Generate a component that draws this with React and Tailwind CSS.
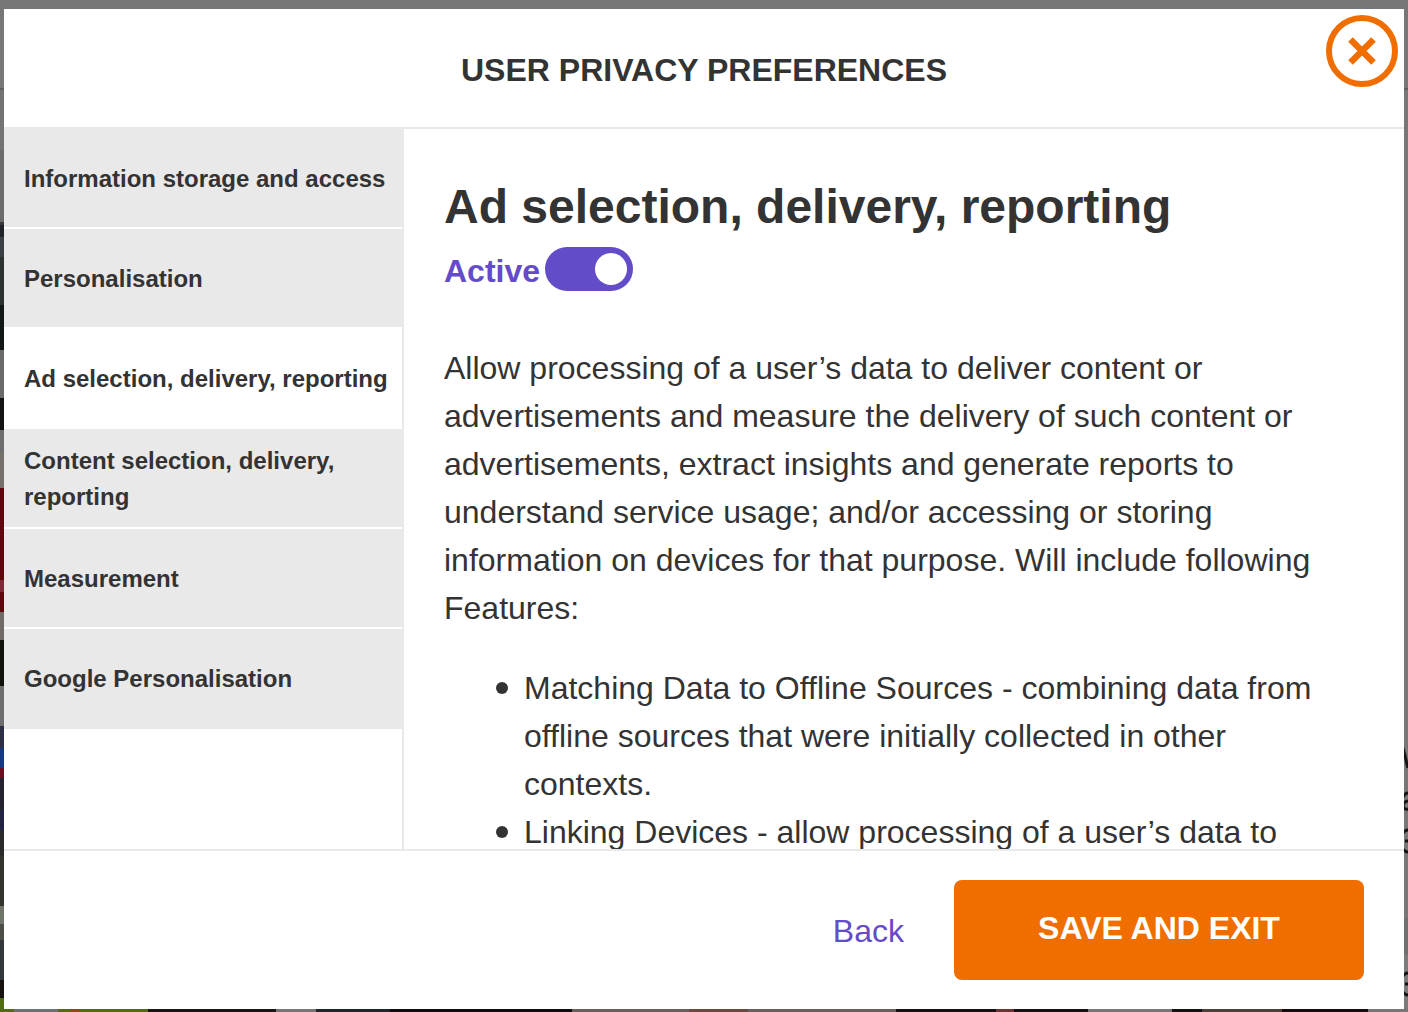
import React, { useState } from "react";

const sections = [
  "Information storage and access",
  "Personalisation",
  "Ad selection, delivery, reporting",
  "Content selection, delivery, reporting",
  "Measurement",
  "Google Personalisation",
];

const features = [
  "Matching Data to Offline Sources - combining data from offline sources that were initially collected in other contexts.",
  "Linking Devices - allow processing of a user’s data to",
];

const leftEdge = [
  [0, 88, "#777777"], [88, 2, "#5f5f5f"], [90, 60, "#757371"], [150, 72, "#6c6a6b"],
  [222, 3, "#3a3838"], [225, 12, "#20232a"], [237, 20, "#3a4145"], [257, 48, "#2b3332"],
  [305, 45, "#141717"], [350, 48, "#6a6a6a"], [398, 32, "#141311"], [430, 22, "#6e6e6e"],
  [452, 36, "#74716a"], [488, 124, "#5c080d"], [580, 12, "#7a2b35"], [612, 28, "#6d6a68"],
  [640, 46, "#12110e"], [686, 40, "#6f6e6c"], [726, 22, "#2c2f45"], [748, 20, "#153a80"],
  [768, 10, "#671022"], [778, 32, "#25232d"], [810, 20, "#222344"], [830, 26, "#292a2c"],
  [856, 50, "#34332b"], [906, 18, "#70756a"], [924, 16, "#4b4e49"], [940, 40, "#34383e"],
  [980, 18, "#15120f"], [998, 14, "#4e6d14"],
];

const rightEdge = [
  [0, 88, "#777777"], [88, 2, "#5f5f5f"], [90, 829, "#777777"], [919, 36, "#707070"], [955, 57, "#7b7b7b"],
];

const bottomEdge = [
  [0, 148, "#4e6d14"], [14, 44, "#6c7374"], [70, 10, "#8a4a18"], [148, 128, "#171414"],
  [276, 40, "#777777"], [316, 74, "#1d2529"], [390, 182, "#0d0c0f"], [572, 117, "#66615d"],
  [689, 59, "#684a3f"], [748, 148, "#66615d"], [896, 192, "#131112"], [996, 18, "#6a3631"],
  [1088, 84, "#777777"], [1172, 30, "#10130f"], [1202, 80, "#4d4038"], [1282, 86, "#120c0e"],
  [1368, 40, "#777777"],
];

function Backdrop() {
  return (
    <svg
      aria-hidden="true"
      viewBox="0 0 1408 1012"
      preserveAspectRatio="none"
      className="absolute inset-0 h-full w-full"
    >
      <rect width="1408" height="1012" fill="#777777" />
      {leftEdge.map(([y, h, c], i) => (
        <rect key={"l" + i} x="0" y={y} width="6" height={h} fill={c} />
      ))}
      {rightEdge.map(([y, h, c], i) => (
        <rect key={"r" + i} x="1402" y={y} width="6" height={h} fill={c} />
      ))}
      {bottomEdge.map(([x, w, c], i) => (
        <rect key={"b" + i} x={x} y="1007" width={w} height="5" fill={c} />
      ))}
      <g fill="none" stroke="#141414" strokeWidth="3">
        <path d="M1403 748 L1408 768" />
        <path d="M1403 797 q2 -4 5 -4 M1408 801 q-5 1 -5 5 q1 4 5 3" />
        <path d="M1403 833 q2 -3 5 -3 M1403 849 q2 3 5 3 M1405 841 h3" />
        <path d="M1403 976 q2 -3 5 -3 M1403 992 q2 3 5 3 M1405 984 h3" />
      </g>
    </svg>
  );
}

export default function App() {
  const [selected, setSelected] = useState(2);
  const [active, setActive] = useState(true);

  return (
    <div className="relative flex h-screen flex-col px-1 pt-[9px] pb-[3px] font-['Liberation_Sans',Arial,sans-serif] text-[#333333]">
      <Backdrop />
      <section
        role="dialog"
        aria-labelledby="dialog-title"
        className="relative flex min-h-0 flex-1 flex-col bg-white"
      >
        <header className="flex justify-center border-b-2 border-[#e9e9e9] px-24 pt-[37px] pb-[33px]">
          <h1 id="dialog-title" className="text-[32px] leading-[48px] font-bold">
            USER PRIVACY PREFERENCES
          </h1>
          <button
            type="button"
            aria-label="Close"
            className="absolute top-1.5 right-1.5 size-[72px] cursor-pointer rounded-full"
          >
            <svg viewBox="0 0 72 72" fill="none" stroke="#f06e00" className="size-full">
              <circle cx="36" cy="36" r="33" strokeWidth="6" />
              <path d="M24.5 24.5 L47.5 47.5 M47.5 24.5 L24.5 47.5" strokeWidth="6.5" />
            </svg>
          </button>
        </header>

        <div className="flex min-h-0 flex-1">
          <nav
            aria-label="Privacy sections"
            className="w-[400px] shrink-0 border-r-2 border-[#e9e9e9]"
          >
            {sections.map((label, i) => (
              <button
                key={label}
                type="button"
                aria-current={selected === i ? "true" : undefined}
                onClick={() => setSelected(i)}
                className={
                  "flex min-h-[100px] w-full cursor-pointer items-center border-b-2 border-white pt-0.5 pl-5 text-left text-[24px] leading-9 font-bold last:border-[#e9e9e9] " +
                  (selected === i ? "bg-white" : "bg-[#e9e9e9]")
                }
              >
                {label}
              </button>
            ))}
          </nav>

          <main className="min-w-0 flex-1 overflow-y-auto pt-[42px] pr-12 pl-10 [scrollbar-width:none]">
            <h2 className="text-[48px] leading-[72px] font-bold">
              Ad selection, delivery, reporting
            </h2>
            <label className="flex w-fit cursor-pointer items-center gap-[5px] text-[32px] leading-[48px] font-bold text-[#644bc8]">
              <span className="pt-1">Active</span>
              <input
                type="checkbox"
                role="switch"
                checked={active}
                onChange={(e) => setActive(e.target.checked)}
                className="h-11 w-[88px] cursor-pointer appearance-none rounded-full bg-gray-400 p-1.5 before:block before:size-8 before:rounded-full before:bg-white checked:bg-[#644bc8] checked:before:ml-11"
              />
            </label>
            <p className="mt-[49px] text-[32px] leading-[48px]">
              Allow processing of a user’s data to deliver content or advertisements and measure
              the delivery of such content or advertisements, extract insights and generate
              reports to understand service usage; and/or accessing or storing information on
              devices for that purpose. Will include following Features:
            </p>
            <ul className="mt-8 pl-[52px] text-[32px] leading-[48px]">
              {features.map((feature) => (
                <li
                  key={feature}
                  className="flex gap-4 before:mt-[18px] before:size-3 before:shrink-0 before:rounded-full before:bg-[#333333]"
                >
                  {feature}
                </li>
              ))}
            </ul>
          </main>
        </div>

        <footer className="flex items-center justify-end gap-[50px] border-t-2 border-[#e9e9e9] px-10 py-[29px]">
          <button
            type="button"
            className="cursor-pointer pt-0.5 text-[32px] leading-[48px] text-[#644bc8]"
          >
            Back
          </button>
          <button
            type="button"
            className="w-[410px] cursor-pointer rounded-lg bg-[#f06e00] pt-6 pb-7 text-[32px] leading-[48px] font-bold text-white"
          >
            SAVE AND EXIT
          </button>
        </footer>
      </section>
    </div>
  );
}
